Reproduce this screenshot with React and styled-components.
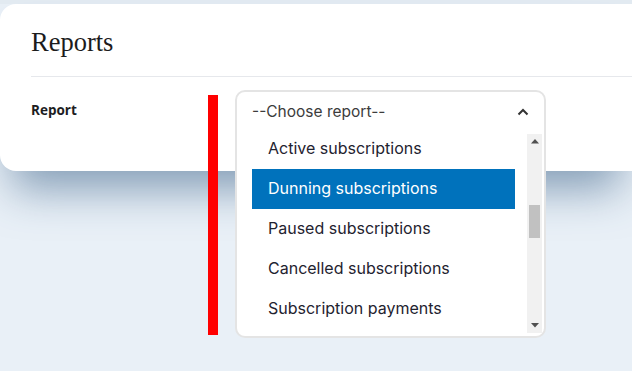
import React from "react";
import styled, { createGlobalStyle } from "styled-components";

const GlobalStyle = createGlobalStyle`
  html, body {
    margin: 0;
    padding: 0;
    background: #e9f0f7;
    overflow: hidden;
  }
`;

const Page = styled.div`
  width: 632px;
  height: 371px;
  padding-top: 4px;
  box-sizing: border-box;
  background: linear-gradient(#e3ebf2 0, #e3ebf2 4px, #e9f0f7 4px);
`;

const Card = styled.div`
  width: 100%;
  height: 167px;
  background: #fff;
  border-radius: 16px 0 0 16px;
  box-sizing: border-box;
  padding: 22px 0 0 31px;
  box-shadow: 0 30px 44px -12px rgba(50, 90, 130, 0.55);
`;

const Title = styled.h1`
  margin: 0;
  font-family: "Liberation Serif", "Times New Roman", serif;
  font-weight: 400;
  font-size: 26.5px;
  line-height: 32px;
  color: #1c1c1c;
`;

const Divider = styled.hr`
  margin: 18px 0 0;
  border: 0;
  height: 1px;
  background: #e6e8ec;
`;

const FormRow = styled.div`
  display: flex;
  align-items: flex-start;
  margin-top: 13px;
`;

const Label = styled.label`
  width: 177px;
  margin-top: 11px;
  font-family: "Open Sans", sans-serif;
  font-weight: 700;
  font-size: 13.5px;
  line-height: 18px;
  color: #1d1d1f;
`;

const ErrorBar = styled.div`
  width: 10px;
  height: 240px;
  margin-top: 5px;
  background: #ff0000;
`;

const SelectBox = styled.div`
  margin-left: 17px;
  width: 311px;
  height: 248px;
  box-sizing: border-box;
  border: 2px solid #e4e4e4;
  border-radius: 10px;
  background: #fff;
  display: flex;
  flex-direction: column;
  font-family: "Inter", sans-serif;
`;

const SelectHead = styled.div`
  height: 37px;
  display: flex;
  align-items: center;
  justify-content: space-between;
  padding: 2px 15px 0 15px;
  box-sizing: border-box;
  font-size: 15.5px;
  color: #3c3c3c;
`;

const ListArea = styled.div`
  display: flex;
  padding-left: 15px;
`;

const Options = styled.ul`
  list-style: none;
  margin: 0;
  padding: 0;
  width: 263px;
`;

const Option = styled.li`
  height: 40px;
  display: flex;
  align-items: center;
  padding: 0 16px 2px;
  box-sizing: border-box;
  font-size: 16px;
  color: ${(p) => (p.$selected ? "#ffffff" : "#1f2330")};
  background: ${(p) => (p.$selected ? "#0072bc" : "transparent")};
`;

const Scrollbar = styled.div`
  margin: 5px 0 0 12px;
  width: 15px;
  height: 199px;
  background: #f1f1f1;
  display: flex;
  flex-direction: column;
  align-items: center;
`;

const ArrowBtn = styled.div`
  height: 15px;
  width: 15px;
  display: flex;
  align-items: center;
  justify-content: center;
`;

const Track = styled.div`
  flex: 1;
  width: 100%;
  display: flex;
  justify-content: center;
`;

const Thumb = styled.div`
  width: 11px;
  height: 33px;
  margin-top: 56px;
  background: #c1c1c1;
`;

const Caret = () => (
  <svg width="12" height="8" viewBox="0 0 12 8">
    <path d="M1.5 6.5 L6 2 L10.5 6.5" fill="none" stroke="#333" strokeWidth="2" />
  </svg>
);

const Tri = ({ down }) => (
  <svg width="8" height="5" viewBox="0 0 8 5">
    <path d={down ? "M0 0 H8 L4 4.5 Z" : "M0 4.5 H8 L4 0 Z"} fill="#505050" />
  </svg>
);

const reports = [
  "Active subscriptions",
  "Dunning subscriptions",
  "Paused subscriptions",
  "Cancelled subscriptions",
  "Subscription payments",
];

function App() {
  return (
    <Page>
      <GlobalStyle />
      <Card>
        <Title>Reports</Title>
        <Divider />
        <FormRow>
          <Label>Report</Label>
          <ErrorBar />
          <SelectBox>
            <SelectHead>
              <span>--Choose report--</span>
              <Caret />
            </SelectHead>
            <ListArea>
              <Options>
                {reports.map((r) => (
                  <Option key={r} $selected={r === "Dunning subscriptions"}>
                    {r}
                  </Option>
                ))}
              </Options>
              <Scrollbar>
                <ArrowBtn>
                  <Tri />
                </ArrowBtn>
                <Track>
                  <Thumb />
                </Track>
                <ArrowBtn>
                  <Tri down />
                </ArrowBtn>
              </Scrollbar>
            </ListArea>
          </SelectBox>
        </FormRow>
      </Card>
    </Page>
  );
}

export default App;
